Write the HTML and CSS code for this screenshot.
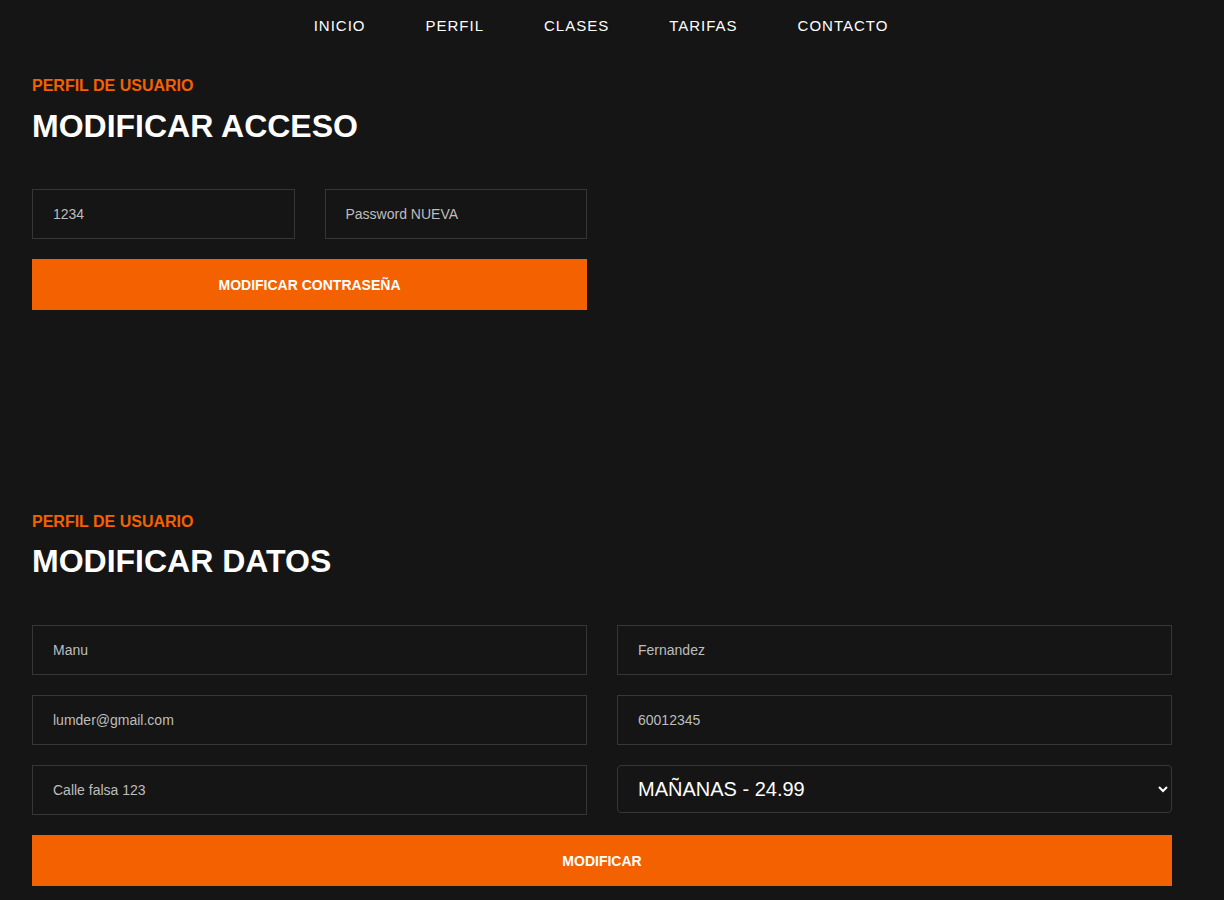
FILE: index.html
```html
<!DOCTYPE html>
<html lang="es">
<head>
<meta charset="utf-8">
<title>Perfil</title>
<link rel="stylesheet" href="styles.css">
</head>
<body>
<nav class="nav">
  <a href="#">INICIO</a>
  <a href="#">PERFIL</a>
  <a href="#">CLASES</a>
  <a href="#">TARIFAS</a>
  <a href="#">CONTACTO</a>
</nav>
<main class="container">
  <section class="section first">
    <span class="eyebrow">PERFIL DE USUARIO</span>
    <h2 class="title">MODIFICAR ACCESO</h2>
    <form class="form half">
      <div class="row">
        <input class="field" type="text" value="1234">
        <input class="field" type="text" placeholder="Password NUEVA">
      </div>
      <button class="btn" type="button">MODIFICAR CONTRASEÑA</button>
    </form>
  </section>
  <section class="section second">
    <span class="eyebrow">PERFIL DE USUARIO</span>
    <h2 class="title">MODIFICAR DATOS</h2>
    <form class="form">
      <div class="row">
        <input class="field" type="text" value="Manu">
        <input class="field" type="text" value="Fernandez">
      </div>
      <div class="row">
        <input class="field" type="text" value="lumder@gmail.com">
        <input class="field" type="text" value="60012345">
      </div>
      <div class="row">
        <input class="field" type="text" value="Calle falsa 123">
        <select class="select">
          <option>MAÑANAS - 24.99</option>
        </select>
      </div>
      <button class="btn" type="button">MODIFICAR</button>
    </form>
  </section>
</main>
</body>
</html>
```
FILE: styles.css
```css
* { box-sizing: border-box; }
html, body { margin: 0; padding: 0; }
body {
  background: #151515;
  font-family: "Liberation Sans", Arial, sans-serif;
  color: #fff;
}
.nav {
  display: flex;
  justify-content: center;
  gap: 60px;
  padding: 17px 0 0 0;
  margin-left: -22px;
  height: 52px;
}
.nav a {
  color: #fff;
  text-decoration: none;
  font-size: 15px;
  letter-spacing: 1px;
  line-height: 18px;
}
.container {
  width: 1140px;
  margin-left: 32px;
}
.section { display: flex; flex-direction: column; }
.second { margin-top: 201px; }
.eyebrow {
  color: #f36100;
  font-weight: 700;
  font-size: 16px;
  line-height: 22px;
  margin-top: 23px;
}
.second .eyebrow { margin-top: 0; }
.title {
  margin: 12px 0 0 0;
  font-size: 32px;
  line-height: 34px;
  font-weight: 700;
  color: #fff;
}
.second .title { margin-top: 11px; }
.form {
  margin-top: 46px;
  display: flex;
  flex-direction: column;
  gap: 20px;
}
.second .form { margin-top: 47px; }
.form.half { width: 555px; }
.row {
  display: grid;
  grid-template-columns: 1fr 1fr;
  gap: 30px;
}
.field {
  height: 50px;
  background: transparent;
  border: 1px solid #363636;
  color: #bdbdbd;
  font-family: "Liberation Sans", Arial, sans-serif;
  font-size: 14px;
  padding: 0 20px;
  outline: none;
}
.field::placeholder { color: #bdbdbd; }
.select {
  height: 48px;
  background: #151515;
  border: 1px solid #363636;
  border-radius: 4px;
  color: #fff;
  font-family: "Liberation Sans", Arial, sans-serif;
  font-size: 20px;
  padding: 0 16px;
}
.btn {
  height: 51px;
  background: #f36100;
  border: none;
  color: #fff;
  font-family: "Liberation Sans", Arial, sans-serif;
  font-weight: 700;
  font-size: 14px;
  letter-spacing: 0;
}
```
